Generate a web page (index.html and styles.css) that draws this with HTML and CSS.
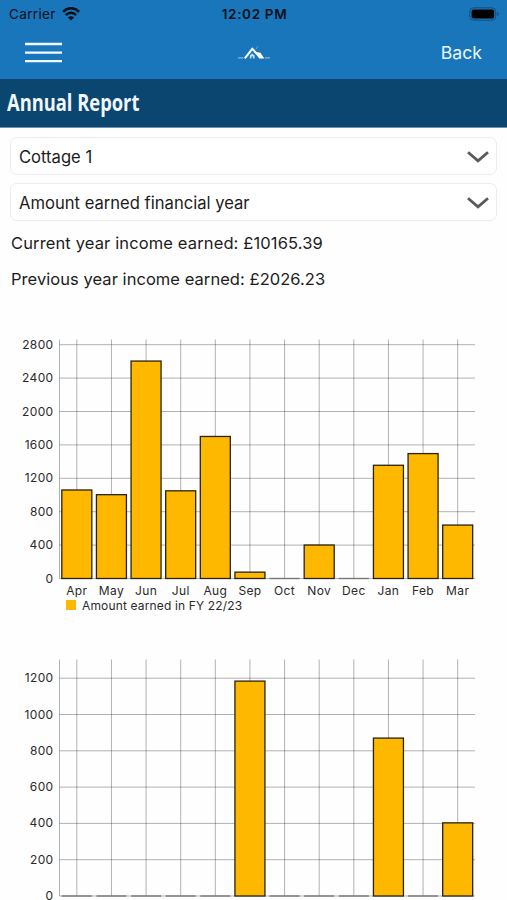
FILE: index.html
```html
<!DOCTYPE html>
<html lang="en">
<head>
    <meta charset="UTF-8">
    <meta name="viewport" content="width=device-width, initial-scale=1.0">
    <title>Annual Report</title>
    <link rel="stylesheet" href="styles.css">
</head>
<body>

    <header class="top">
        <div class="status-bar">
            <div class="carrier">
                <span>Carrier</span>
                <svg width="18" height="14" viewBox="0 0 18 14" fill="none" stroke="#071019" stroke-width="2.6">
                    <path d="M1 4.8C5.5 0 12.5 0 17 4.8"/>
                    <path d="M3.8 8.1C6.9 5 11.1 5 14.2 8.1"/>
                    <path d="M9 13.6L5.9 10.4C7.7 8.8 10.3 8.8 12.1 10.4Z" fill="#071019" stroke="none"/>
                </svg>
            </div>
            <span class="time">12:02 PM</span>
            <svg class="battery" width="31" height="14" viewBox="0 0 31 14">
                <rect x=".8" y=".8" width="26" height="12.4" rx="3.8" fill="none" stroke="#11507f"/>
                <rect x="2.6" y="2.5" width="22.6" height="9" rx="2" fill="#000"/>
                <path d="M28.2 5v4q1.6-.5 1.6-2t-1.6-2z" fill="#11507f"/>
            </svg>
        </div>
        <nav class="nav-bar">
            <button type="button" class="menu-btn" aria-label="Menu">
                <svg width="37" height="21" viewBox="0 0 37 21" stroke="#f2f9ff" stroke-width="2.4">
                    <path d="M0 2h37M0 10.6h37M0 19.1h37"/>
                </svg>
            </button>
            <svg class="logo" width="32" height="15" viewBox="0 0 32 15">
                <path d="M0 12.9h5.5M27 12.9h5" stroke="#9cc4e3" stroke-width="1"/>
                <path d="M6.8 13.4L14.3 3.9L18.5 8.4" fill="none" stroke="#fff" stroke-width="2"/>
                <path d="M15 3.2L18.2 7L22.4 7.8L26.3 13.4H21.4L16.8 8Z" fill="#fff"/>
                <path d="M11.8 13.4V10.4L14.2 8.4L16.6 10.4V13.4H15V11.4H13.4V13.4Z" fill="#c7def0"/>
                <path d="M18 4.2l1.8-3" stroke="#69a5d3" stroke-width="1"/>
            </svg>
            <a href="#" class="back">Back</a>
        </nav>
    </header>

    <div class="title-bar">
        <h1>Annual Report</h1>
    </div>

    <main>
        <button type="button" class="select">
            <span>Cottage 1</span>
            <svg width="24" height="14" viewBox="0 0 24 14" fill="none" stroke="#5a5a5a" stroke-width="2.8"><path d="M2 2.2L12 10.9L22 2.2"/></svg>
        </button>
        <button type="button" class="select">
            <span>Amount earned financial year</span>
            <svg width="24" height="14" viewBox="0 0 24 14" fill="none" stroke="#5a5a5a" stroke-width="2.8"><path d="M2 2.2L12 10.9L22 2.2"/></svg>
        </button>
        <p class="income">Current year income earned: £10165.39</p>
        <p class="income previous">Previous year income earned: £2026.23</p>

        <section class="chart">
            <svg id="chart-current" width="507" height="264"></svg>
            <div class="legend"><i></i><span>Amount earned in FY 22/23</span></div>
        </section>
        <section class="chart chart-last">
            <svg id="chart-previous" width="507" height="247"></svg>
        </section>
    </main>

    <script src="charts.js"></script>
</body>
</html>
```

FILE: styles.css
```css
* {
    box-sizing: border-box;
}

body {
    margin: 0;
    height: 900px;
    overflow: hidden;
    background-color: #fefefe;
    color: #1c1c1c;
    font-family: Inter, sans-serif;
}

button {
    font-family: inherit;
    color: inherit;
    background: none;
    border: none;
    padding: 0;
}

/* Header */
.top {
    height: 79px;
    background-color: #1976bb;
}

.status-bar {
    display: grid;
    grid-template-columns: 1fr auto 1fr;
    align-items: center;
    height: 27px;
    padding: 0 7px 0 9px;
    font-size: 13.5px;
    color: #071019;
}

.carrier {
    display: flex;
    align-items: center;
    gap: 6px;
    letter-spacing: 0.35px;
}

.time {
    font-weight: 600;
    letter-spacing: 0.65px;
}

.battery {
    justify-self: end;
}

.nav-bar {
    display: grid;
    grid-template-columns: 1fr auto 1fr;
    align-items: center;
    height: 50px;
    padding: 0 25px;
}

.menu-btn {
    width: 37px;
}

.menu-btn svg,
.logo {
    display: block;
}

.back {
    justify-self: end;
    color: #e9f6ff;
    font-size: 17.7px;
    text-decoration: none;
}

.title-bar {
    height: 49px;
    padding: 12px 0 0 7px;
    background-color: #0a466f;
    border-bottom: 1px solid #6f93ad;
}

.title-bar h1 {
    margin: 0;
    font-family: "Open Sans", sans-serif;
    font-size: 23.5px;
    font-weight: 700;
    line-height: 1;
    color: #f1f7fc;
    white-space: nowrap;
    transform: scaleX(0.78);
    transform-origin: left;
}

/* Filters */
.select {
    display: flex;
    align-items: center;
    justify-content: space-between;
    width: 487px;
    height: 38px;
    margin: 9px 0 0 10px;
    padding: 1px 6px 0 8px;
    border: 1px solid #ececec;
    border-radius: 7px;
    background-color: #fff;
    font-size: 16.6px;
}

.select + .select {
    margin-top: 8px;
}

.income {
    margin: 0 0 0 11px;
    font-size: 16.5px;
    line-height: 36px;
    letter-spacing: 0.13px;
}

.income.previous {
    letter-spacing: 0.05px;
}

.select + .income {
    margin-top: 4px;
}

/* Charts */
.chart {
    height: 320px;
}

.income + .chart {
    margin-top: 36px;
}

.chart-last {
    height: 247px;
}

.chart svg {
    display: block;
    overflow: visible;
}

.grid {
    stroke: #000;
    stroke-opacity: 0.3;
    stroke-width: 1;
}

.bar {
    fill: #ffb800;
    stroke: #29220d;
    stroke-width: 1.3;
}

.empty {
    stroke: #777;
    stroke-width: 1.4;
}

.label {
    font-size: 12px;
    letter-spacing: 0.35px;
    fill: #2a2a2a;
}

.label.value {
    text-anchor: end;
}

.label.month {
    text-anchor: middle;
}

.legend {
    display: flex;
    align-items: center;
    gap: 6px;
    height: 14px;
    margin-top: 1px;
    padding-left: 66px;
    font-size: 12px;
    letter-spacing: 0.15px;
    color: #2a2a2a;
}

.legend i {
    width: 10px;
    height: 10px;
    background-color: #ffb800;
}
```

FILE: charts.js
```js
const months = ['Apr', 'May', 'Jun', 'Jul', 'Aug', 'Sep', 'Oct', 'Nov', 'Dec', 'Jan', 'Feb', 'Mar'];

const left = 59.5;
const right = 475;
const topEdge = 6.5;
const barWidth = 30;

function line(x1, y1, x2, y2, cls) {
    return `<line class="${cls}" x1="${x1}" y1="${y1}" x2="${x2}" y2="${y2}"/>`;
}

// base is the y of the zero line, stepHeight the distance between two grid lines
function drawChart(id, values, step, max, base, stepHeight, showMonths) {
    const col = (right - left) / months.length;
    let out = line(left, topEdge, left, base, 'grid');

    for (let v = 0; v <= max; v += step) {
        const y = base - v / step * stepHeight;
        out += line(left, y, right, y, 'grid');
        out += `<text class="label value" x="53.5" y="${y + 4}">${v}</text>`;
    }

    months.forEach((month, i) => {
        const x = left + col * (i + 0.5);
        out += line(x, topEdge, x, base, 'grid');
        if (values[i] > 0) {
            const h = values[i] / step * stepHeight;
            out += `<rect class="bar" x="${x - barWidth / 2}" y="${base - h}" width="${barWidth}" height="${h}"/>`;
        } else {
            out += line(x - barWidth / 2, base, x + barWidth / 2, base, 'empty');
        }
        if (showMonths) {
            out += `<text class="label month" x="${x}" y="${base + 16.5}">${month}</text>`;
        }
    });

    document.getElementById(id).innerHTML = out;
}

drawChart('chart-current', [1060, 1004, 2604, 1050, 1701, 76, 0, 401, 0, 1356, 1496, 640], 400, 2800, 245.5, 33.4, true);
drawChart('chart-previous', [0, 0, 0, 0, 0, 1184, 0, 0, 0, 870, 0, 403], 200, 1200, 243, 36.3, false);
```
